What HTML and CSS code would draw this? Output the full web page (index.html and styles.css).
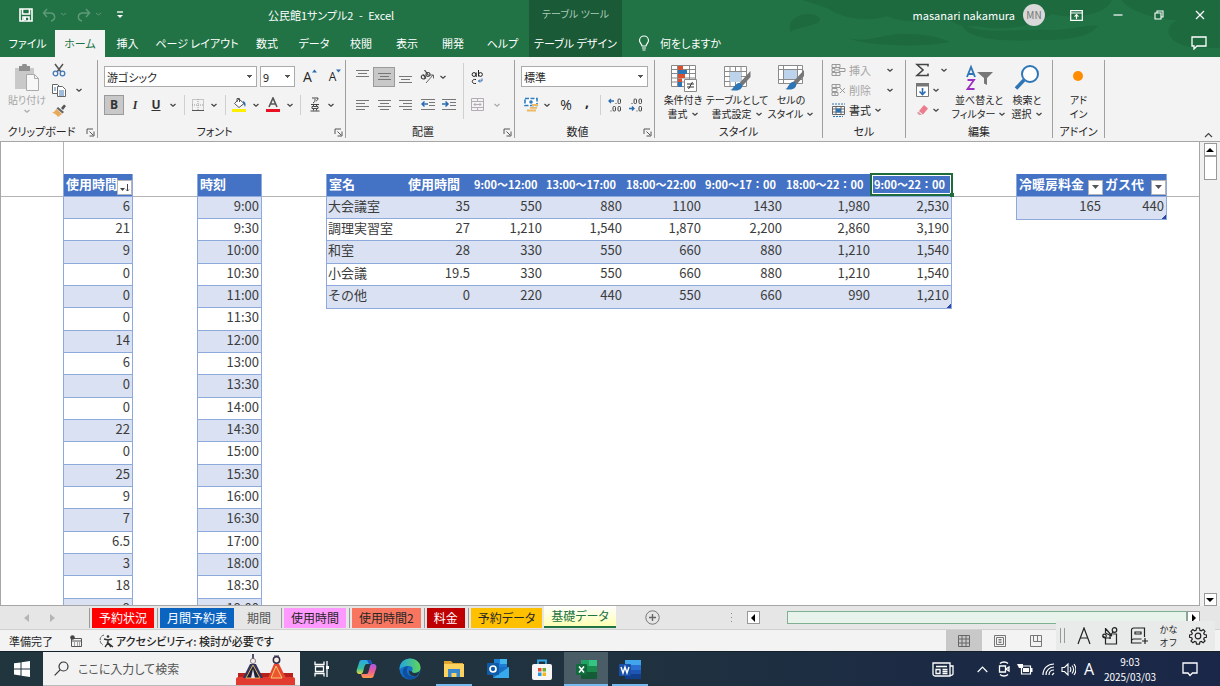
FILE: index.html
```html
<!DOCTYPE html>
<html lang="ja">
<head>
<meta charset="utf-8">
<title>公民館1サンプル2 - Excel</title>
<link rel="stylesheet" href="styles.css">
</head>
<body>
<svg class="defs" aria-hidden="true">
  <symbol id="chev" viewBox="0 0 8 8"><path d="M1.500 3 4 5.200 6.500 3" fill="none" stroke="currentColor" stroke-width="1.300"/></symbol>
  <symbol id="launch" viewBox="0 0 9 9"><path d="M1 6V1h6M3.500 3.500 7 7M8 3.500V8H3.500" fill="none" stroke="#555"/></symbol>
  <symbol id="brushgrid" viewBox="0 0 28 28"><path d="M1.500 2.500h22v20h-22zM1.500 7.500h22M1.500 12.500h22M1.500 17.500h22M7 2.500v20M12.500 2.500v20M18 2.500v20" fill="#fff" stroke="#8a8a8a"/><path d="M7 8h11v10H7z" fill="#bdd3ec"/><path d="M27.500 7v6l-8 9-3-3z" fill="#777"/><path d="M15.500 19c3 0 5 2 3 5-2 3-7 3-11 2 3-1 4-6 8-7z" fill="#2e75b6"/></symbol>
</svg>

<header class="titlebar">
  <div class="title-left">
    <nav class="quick" aria-label="クイック アクセス">
      <button aria-label="上書き保存"><svg width="14" height="14" viewBox="0 0 14 14"><path d="M1 1h12v12H1zM3.500 1v5h7V1M4 13V9h6v4" fill="none" stroke="#fff" stroke-width="1.600"/><path d="M5 9h2v3H5z" fill="#fff"/></svg></button>
      <button class="faded" aria-label="元に戻す"><svg width="26" height="14" viewBox="0 0 26 14"><path d="M5 1 1.500 5 5 9M2 5h6c6 0 6 7 1 8" fill="none" stroke="currentColor" stroke-width="1.500"/><path d="m19 5 2.500 2L24 5" fill="none" stroke="currentColor"/></svg></button>
      <button class="faded" aria-label="やり直し"><svg width="26" height="14" viewBox="0 0 26 14"><path d="m9 1 3.500 4L9 9M12 5H6c-6 0-6 7-1 8" fill="none" stroke="currentColor" stroke-width="1.500"/><path d="m19 5 2.500 2L24 5" fill="none" stroke="currentColor"/></svg></button>
      <button class="custom" aria-label="カスタマイズ"><svg width="8" height="8" viewBox="0 0 8 8"><path d="M1 1h6" stroke="#fff" stroke-width="1.300"/><path d="M1 4h6L4 7z" fill="#fff"/></svg></button>
    </nav>
    <h1 class="doc-title">公民館1サンプル2&ensp;-&ensp;Excel</h1>
  </div>
  <div class="context-label">テーブル ツール</div>
  <div class="title-right">
    <svg class="clouds" viewBox="0 0 598 57" preserveAspectRatio="none" aria-hidden="true"><path d="M180 0h310c-5 15-40 20-60 14-15 12-50 18-75 12-20 2-28-6-30-10-20 8-50 6-60 0-22 8-50 0-60-8zM226 38c20 6 40-6 60-4 20 0 34 4 42 8-30 6-84 4-102-4zM340 24c20 12 60 4 90 6 20 0 36-6 46-4-10 14-40 14-60 14-30 2-74 0-76-16zM500 0h98v48c-16 0-30 2-44-6-12-8-8-18 2-22-18 0-50-8-56-20z" fill="#1d6a3f"/><path d="M168 24c6-12 24-12 30-6 2 8-20 8-30 14z" fill="#1d6a3f"/></svg>
    <span class="user">masanari nakamura</span>
    <span class="avatar">MN</span>
    <button aria-label="リボンの表示オプション"><svg width="13" height="11" viewBox="0 0 13 11"><path d="M.7.700h11.600v9.600H.7zM.7 3h11.600M6.500 9V5M4.500 6.700l2-2 2 2" fill="none" stroke="#fff" stroke-width="1.200"/></svg></button>
    <button aria-label="最小化"><svg width="10" height="10" viewBox="0 0 10 10"><path d="M.5 5h9" stroke="#fff" stroke-width="1.200"/></svg></button>
    <button aria-label="元のサイズに戻す"><svg width="10" height="10" viewBox="0 0 10 10"><path d="M1 3h6v6H1zM3 3V1h6v6H7" fill="none" stroke="#fff" stroke-width="1.100"/></svg></button>
    <button aria-label="閉じる"><svg width="10" height="10" viewBox="0 0 10 10"><path d="m1 1 8 8m0-8L1 9" stroke="#fff" stroke-width="1.200"/></svg></button>
  </div>
  <nav class="tabs" aria-label="リボン タブ">
    <button>ファイル</button><button class="current">ホーム</button><button>挿入</button><button>ページ レイアウト</button><button>数式</button><button>データ</button><button>校閲</button><button>表示</button><button>開発</button><button>ヘルプ</button>
  </nav>
  <button class="context-tab">テーブル デザイン</button>
  <div class="tell-row">
    <button class="tell"><svg width="12" height="16" viewBox="0 0 12 16"><path d="M4 11c0-2-2.500-3-2.500-5.500a4.500 4.500 0 0 1 9 0C10.500 8 8 9 8 11zM4 13h4M4.500 15h3" fill="none" stroke="#fff" stroke-width="1.200"/></svg>何をしますか</button>
    <button aria-label="コメント"><svg width="16" height="14" viewBox="0 0 16 14"><path d="M1 1h14v9H6l-3 3v-3H1z" fill="none" stroke="#fff" stroke-width="1.300"/></svg></button>
  </div>
</header>

<section class="ribbon" aria-label="ホーム">
  <div class="group g-clip">
    <div class="body clip">
      <button class="big disabled"><svg width="26" height="28" viewBox="0 0 26 28"><path d="M1 4h19v21H1z" fill="#c9c9c9"/><path d="M5 2h3a2.500 2.500 0 0 1 5 0h3v5H5z" fill="#8f8f8f"/><path d="M12.500 10.500h8l4 4v12h-12z" fill="#f7f7f7" stroke="#aaa"/><path d="M20.500 10.500v4h4" fill="none" stroke="#aaa"/></svg><span>貼り付け</span><svg class="ch"><use href="#chev"/></svg></button>
      <div class="stack">
        <button aria-label="切り取り"><svg width="14" height="14" viewBox="0 0 14 14"><path d="m3 1 6 8M11 1 5 9" stroke="#555" stroke-width="1.500"/><circle cx="3.500" cy="10.500" r="2.300" fill="none" stroke="#4579b8" stroke-width="1.300"/><circle cx="10.500" cy="10.500" r="2.300" fill="none" stroke="#4579b8" stroke-width="1.300"/></svg></button>
        <button aria-label="コピー"><svg width="14" height="14" viewBox="0 0 14 14"><path d="M.5 1.500h5l2 2v7h-7z" fill="#fff" stroke="#666"/><path d="M5.500 3.500h5l3 3v7h-8z" fill="#fff" stroke="#666"/><path d="M2 5h2M2 7h2M7 8h5M7 10h5M7 12h5" stroke="#4579b8"/></svg></button><svg class="ch"><use href="#chev"/></svg>
        <button aria-label="書式のコピー"><svg width="14" height="13" viewBox="0 0 14 13"><path d="m9 4 3-3.500 2 1.500-3 4z" fill="#555"/><path d="m6 3 6 5-1.500 1.500-6-5z" fill="#666"/><path d="m4.500 5 5.500 5-4 3C5 11 2 9 0 9c2-1 3-2 4.500-4z" fill="#e9a95b"/></svg></button>
      </div>
    </div>
    <footer>クリップボード<svg class="la"><use href="#launch"/></svg></footer>
  </div>

  <div class="group g-font">
    <div class="body">
      <div class="line font-a">
        <select aria-label="フォント"><option>游ゴシック</option></select>
        <select aria-label="フォント サイズ"><option>9</option></select>
        <button aria-label="拡大"><span class="latin">A</span><svg class="tri" width="5" height="4" viewBox="0 0 5 4"><path d="M0 3.500 2.500.500 5 3.500z" fill="#2b6cb0"/></svg></button>
        <button aria-label="縮小"><span class="latin small">A</span><svg class="tri" width="5" height="4" viewBox="0 0 5 4"><path d="M0 .5h5L2.500 3.500z" fill="#2b6cb0"/></svg></button>
      </div>
      <div class="line font-b">
        <button class="on"><b>B</b></button><button><i class="serif">I</i></button><button><u>U</u></button><svg class="ch"><use href="#chev"/></svg>
        <span class="sep"></span>
        <button aria-label="罫線"><svg width="12" height="12" viewBox="0 0 12 12"><path d="M.5.500h11v11H.5zM6 0v12M0 6h12" fill="none" stroke="#999" stroke-dasharray="1 1"/><path d="M0 11.500h12" stroke="#555"/></svg></button><svg class="ch"><use href="#chev"/></svg>
        <span class="sep"></span>
        <button aria-label="塗りつぶし"><svg width="15" height="15" viewBox="0 0 15 15"><path d="m7 2 5 4.500-5 4-4.500-4z" fill="#fff" stroke="#555"/><path d="M5 5V1.500h2.500V5" fill="none" stroke="#555"/><path d="M11 4c3 1 3 4 2 6-1-3-2-3-2-6z" fill="#2b6cb0"/><path d="M0 12h14v3H0z" fill="#ffef00"/></svg></button><svg class="ch"><use href="#chev"/></svg>
        <button aria-label="フォントの色"><svg width="14" height="15" viewBox="0 0 14 15"><path d="m3 10 4-9 4 9M4.500 7h5" fill="none" stroke="#555" stroke-width="1.600"/><path d="M0 12h14v3H0z" fill="#e81123"/></svg></button><svg class="ch"><use href="#chev"/></svg>
        <span class="sep"></span>
        <button aria-label="ふりがな"><svg width="10" height="15" viewBox="0 0 10 15"><path d="M2 1h6c0 2-1 2.500-2 3M5 2c0 2 0 3-2 4M1 7.500h8M3.500 7.500v2H2v2h1.500v2M6.500 7.500v2H8v2H6.500v2M3.500 9.500h3M3.500 11.500h3M.5 14h9" fill="none" stroke="#444"/></svg></button><svg class="ch"><use href="#chev"/></svg>
      </div>
    </div>
    <footer>フォント<svg class="la"><use href="#launch"/></svg></footer>
  </div>

  <div class="group g-align">
    <div class="body">
      <div class="line align">
        <button aria-label="上揃え"><svg class="al"><path d="M0 .5h13M2 3.500h9M0 6.500h13"/></svg></button>
        <button class="on" aria-label="上下中央揃え"><svg class="al"><path d="M0 3.500h13M2 6.500h9M0 9.500h13"/></svg></button>
        <button aria-label="下揃え"><svg class="al"><path d="M0 6.500h13M2 9.500h9M0 12.500h13"/></svg></button>
        <button aria-label="方向"><svg width="15" height="14" viewBox="0 0 15 14"><g fill="none" stroke="#444" stroke-width="1.200"><circle cx="3.300" cy="7" r="2"/><path d="m3 4.500 3 4"/><circle cx="8" cy="4.500" r="2"/><path d="m4.500 0 4 5.500"/></g><path d="m6 13 7-8m-3 0h3.500v3.500" fill="none" stroke="#666"/></svg></button><svg class="ch near"><use href="#chev"/></svg>
        <span class="sep"></span>
        <button aria-label="折り返し"><svg width="13" height="14" viewBox="0 0 13 14"><g fill="none" stroke="#222"><circle cx="3" cy="4.500" r="1.900"/><path d="M5.200 2.500v4.500M7.500 0v6.500"/><circle cx="9.500" cy="4.500" r="1.900"/><path d="M5 9.500c-5-1-5 5 0 4"/></g><path d="M11 8.500v2.500H7.500M9 9.500 7.500 11 9 12.500" fill="none" stroke="#2b6cb0"/></svg></button><span></span>
      </div>
      <div class="line align">
        <button aria-label="左揃え"><svg class="al"><path d="M0 2.500h13M0 5.500h9M0 8.500h13M0 11.500h9"/></svg></button>
        <button aria-label="中央揃え"><svg class="al"><path d="M0 2.500h13M2 5.500h9M0 8.500h13M2 11.500h9"/></svg></button>
        <button aria-label="右揃え"><svg class="al"><path d="M0 2.500h13M4 5.500h9M0 8.500h13M4 11.500h9"/></svg></button>
        <button aria-label="インデントを減らす"><svg class="al wide"><path d="M0 1.500h14M8 4.500h6M8 7.500h6M0 11.500h14"/><path class="arrow" d="M7 6H1m2.500-2.500L1 6l2.500 2.500"/></svg></button>
        <button aria-label="インデントを増やす"><svg class="al wide"><path d="M0 1.500h14M8 4.500h6M8 7.500h6M0 11.500h14"/><path class="arrow" d="M0 6h6M3.500 3.500 6 6 3.500 8.500"/></svg></button>
        <span class="sep"></span>
        <button aria-label="セルを結合"><svg class="al faint"><path d="M.5.500h12v12H.5zM.5 3.500h12M.5 9.500h12M6.500.500v3M6.500 9.500v3M3 6.500h7M4.500 5 3 6.500 4.500 8M8.500 5 10 6.500 8.500 8"/></svg></button><svg class="ch dim"><use href="#chev"/></svg>
      </div>
    </div>
    <footer>配置<svg class="la"><use href="#launch"/></svg></footer>
  </div>

  <div class="group g-num">
    <div class="body">
      <div class="line"><select aria-label="表示形式"><option>標準</option></select></div>
      <div class="line num">
        <button aria-label="通貨"><svg width="15" height="15" viewBox="0 0 15 15"><path d="M1 1.500h12v7H1z" fill="#fff" stroke="#2b7cc0" stroke-width="1.600" stroke-dasharray="4 1.500"/><circle cx="7" cy="5" r="1.800" fill="#2b7cc0"/><path d="M8 7h6v2H8zM6 10h7v1.800H6zM3 12.500h9v2H3z" fill="#edb866"/></svg></button><svg class="ch"><use href="#chev"/></svg>
        <button class="pct">%</button><button class="comma">,</button><span class="sep"></span>
        <button aria-label="小数点以下の桁数を増やす"><svg width="14" height="14" viewBox="0 0 14 14"><path d="M6 3H1m2-2L1 3l2 2" fill="none" stroke="#2b6cb0" stroke-width="1.300"/><g fill="none" stroke="#444"><path d="M8 5v1"/><rect x="10" y="1" width="2.500" height="4.500" rx="1"/><path d="M3 12.500v1"/><rect x="5" y="8.500" width="2.500" height="4.500" rx="1"/><rect x="10" y="8.500" width="2.500" height="4.500" rx="1"/></g></svg></button>
        <button aria-label="小数点以下の桁数を減らす"><svg width="14" height="14" viewBox="0 0 14 14"><path d="M0 10.500h5M3 8.500l2 2-2 2" fill="none" stroke="#2b6cb0" stroke-width="1.300"/><g fill="none" stroke="#444"><path d="M3 5v1"/><rect x="5" y="1" width="2.500" height="4.500" rx="1"/><rect x="10" y="1" width="2.500" height="4.500" rx="1"/><path d="M8 12.500v1"/><rect x="10" y="8.500" width="2.500" height="4.500" rx="1"/></g></svg></button>
      </div>
    </div>
    <footer>数値<svg class="la"><use href="#launch"/></svg></footer>
  </div>

  <div class="group g-style">
    <div class="body bigs styles">
      <button class="big"><svg width="28" height="28" viewBox="0 0 28 28"><path d="M2.500 1.500h24v21h-24zM2.500 5.500h24M2.500 9.500h24M2.500 14h24M2.500 18h24M8.500 1.500v21M20.500 1.500v21" fill="#fff" stroke="#888"/><path d="M9 2h5v4H9zM9 10h7v4H9zM9 14.500h4V18H9z" fill="#d8502f"/><path d="M9 6h9v4H9zM9 18h4v5H9z" fill="#2e75b6"/><path d="M15.500 15.500h12v12h-12z" fill="#fff" stroke="#888"/><path d="M18 20h7M18 23h7M23.500 18l-4 7" stroke="#333"/></svg><span>条件付き</span><span>書式<svg class="ch"><use href="#chev"/></svg></span></button>
      <button class="big"><svg width="28" height="28"><use href="#brushgrid"/></svg><span>テーブルとして</span><span>書式設定<svg class="ch"><use href="#chev"/></svg></span></button>
      <button class="big"><svg width="28" height="28" viewBox="0 0 28 28"><path d="M1.500 1.500h24v18h-24zM1.500 5.500h24M1.500 15.500h24M6.500 1.500v18M20.500 1.500v18" fill="#fff" stroke="#8a8a8a"/><path d="M7 6h13v9H7z" fill="#bdd3ec"/><path d="M27 6v6l-8 9-3-3z" fill="#777"/><path d="M15.500 18c3 0 5 2 3 5-2 3-7 3-10 2 3-1 3-6 7-7z" fill="#2e75b6"/></svg><span>セルの</span><span>スタイル<svg class="ch"><use href="#chev"/></svg></span></button>
    </div>
    <footer>スタイル</footer>
  </div>

  <div class="group g-cell">
    <div class="body cells">
      <button class="disabled"><svg width="15" height="14" viewBox="0 0 15 14"><path d="M1 1.500h8v3H1zM5 1.500v3M1 9.500h8v3H1zM5 9.500v3M1 5.500h3v3H1zM14 5.500H8v3h6zM7 7H5" fill="none" stroke="#999"/></svg>挿入</button><svg class="ch"><use href="#chev"/></svg>
      <button class="disabled"><svg width="15" height="14" viewBox="0 0 15 14"><path d="M1 1.500h8v3H1zM5 1.500v3M1 9.500h6v3H1zM4 9.500v3M1 5.500h5v3H1zM9 5l5 5m0-5-5 5" fill="none" stroke="#999"/></svg>削除</button><svg class="ch"><use href="#chev"/></svg>
      <button><svg width="15" height="14" viewBox="0 0 15 14"><path d="M1.500 3.500h12v8h-12zM1.500 6h12M1.500 9h12M5 3.500v8M10 3.500v8" fill="#fff" stroke="#666"/><path d="M5 5.500h5v4H5z" fill="#2e75b6"/><path d="M1 1h13M2 13.500h10" stroke="#2e75b6" stroke-dasharray="2 1"/></svg>書式<svg class="ch"><use href="#chev"/></svg></button>
    </div>
    <footer>セル</footer>
  </div>

  <div class="group g-edit">
    <div class="body edit">
      <div class="sums">
        <button aria-label="合計"><svg width="15" height="14" viewBox="0 0 15 14"><path d="M13 3.500V1.500H2l6 5.500-6 5.500h11v-2" fill="none" stroke="#444" stroke-width="1.600"/></svg></button><svg class="ch late"><use href="#chev"/></svg>
        <button aria-label="フィル"><svg width="13" height="14" viewBox="0 0 13 14"><path d="M.5.500h12v13H.5z" fill="#fff" stroke="#777"/><path d="M0 0h13v3.500H0z" fill="#777"/><path d="M6.500 5v6.500M3.500 8.500l3 3 3-3" fill="none" stroke="#2b6cb0" stroke-width="1.600"/></svg></button><svg class="ch"><use href="#chev"/></svg>
        <button aria-label="クリア"><svg width="13" height="12" viewBox="0 0 13 12"><path d="m8 1 4 3.500-5 6L3 7z" fill="#ec7c8c"/><path d="M2.500 7.500 6 11H3L1 9z" fill="#d8a0aa"/></svg></button><svg class="ch"><use href="#chev"/></svg>
      </div>
      <button class="big"><svg width="28" height="28" viewBox="0 0 28 28"><path d="m2 13 4-10 4 10M3.500 10h5" fill="none" stroke="#2e75b6" stroke-width="1.800"/><path d="M2.500 16H9l-6.500 9H9.500" fill="none" stroke="#9b30c0" stroke-width="1.800"/><path d="M12 8h16l-6 6v7l-3-1.500V14z" fill="#777"/></svg><span>並べ替えと</span><span>フィルター<svg class="ch"><use href="#chev"/></svg></span></button>
      <button class="big"><svg width="28" height="28" viewBox="0 0 28 28"><circle cx="17" cy="10" r="8" fill="#fff" stroke="#2e75b6" stroke-width="2"/><path d="M11 16 3 24.500" stroke="#2e75b6" stroke-width="3.500"/></svg><span>検索と</span><span>選択<svg class="ch"><use href="#chev"/></svg></span></button>
    </div>
    <footer>編集</footer>
  </div>

  <div class="group g-add">
    <div class="body bigs">
      <button class="big"><svg width="28" height="28" viewBox="0 0 28 28"><circle cx="13" cy="12" r="5" fill="#ff8c00"/></svg><span>アド</span><span>イン</span></button>
    </div>
    <footer>アドイン</footer>
  </div>
  <button class="collapse" aria-label="リボンを折りたたむ"><svg width="9" height="6" viewBox="0 0 9 6"><path d="m1 5 3.500-3.500L8 5" fill="none" stroke="#444" stroke-width="1.200"/></svg></button>
</section>

<main class="work">
  <div class="sheet">
    <table class="grid t-use">
      <thead><tr><th>使用時間<button class="filter" aria-label="並べ替え済み"><svg width="10" height="8" viewBox="0 0 10 8"><path d="M0 4h5L2.500 7z" fill="#444"/><path d="M7.500 0v7M6 5.500 7.500 7 9 5.500" fill="none" stroke="#444"/></svg></button></th></tr></thead>
      <tbody>
        <tr><td>6</td></tr><tr><td>21</td></tr><tr><td>9</td></tr><tr><td>0</td></tr><tr><td>0</td></tr><tr><td>0</td></tr><tr><td>14</td></tr><tr><td>6</td></tr><tr><td>0</td></tr><tr><td>0</td></tr><tr><td>22</td></tr><tr><td>0</td></tr><tr><td>25</td></tr><tr><td>9</td></tr><tr><td>7</td></tr><tr><td>6.5</td></tr><tr><td>3</td></tr><tr><td>18</td></tr><tr><td>9</td></tr>
      </tbody>
    </table>
    <table class="grid t-clock">
      <thead><tr><th>時刻</th></tr></thead>
      <tbody>
        <tr><td>9:00</td></tr><tr><td>9:30</td></tr><tr><td>10:00</td></tr><tr><td>10:30</td></tr><tr><td>11:00</td></tr><tr><td>11:30</td></tr><tr><td>12:00</td></tr><tr><td>13:00</td></tr><tr><td>13:30</td></tr><tr><td>14:00</td></tr><tr><td>14:30</td></tr><tr><td>15:00</td></tr><tr><td>15:30</td></tr><tr><td>16:00</td></tr><tr><td>16:30</td></tr><tr><td>17:00</td></tr><tr><td>18:00</td></tr><tr><td>18:30</td></tr><tr><td>19:00</td></tr>
      </tbody>
    </table>
    <table class="grid t-room">
      <colgroup><col class="c79"><col class="c66"><col class="c72"><col class="c80"><col class="c79"><col class="c81"><col class="c88"><col class="c79"></colgroup>
      <thead><tr><th>室名</th><th>使用時間</th><th class="slot">9:00～12:00</th><th class="slot">13:00～17:00</th><th class="slot">18:00～22:00</th><th class="slot">9:00～17：00</th><th class="slot">18:00～22：00</th><th class="slot">9:00～22：00<span class="cursor"></span></th></tr></thead>
      <tbody>
        <tr><td>大会議室</td><td>35</td><td>550</td><td>880</td><td>1100</td><td>1430</td><td>1,980</td><td>2,530</td></tr>
        <tr><td>調理実習室</td><td>27</td><td>1,210</td><td>1,540</td><td>1,870</td><td>2,200</td><td>2,860</td><td>3,190</td></tr>
        <tr><td>和室</td><td>28</td><td>330</td><td>550</td><td>660</td><td>880</td><td>1,210</td><td>1,540</td></tr>
        <tr><td>小会議</td><td>19.5</td><td>330</td><td>550</td><td>660</td><td>880</td><td>1,210</td><td>1,540</td></tr>
        <tr><td>その他</td><td>0</td><td>220</td><td>440</td><td>550</td><td>660</td><td>990</td><td class="corner">1,210</td></tr>
      </tbody>
    </table>
    <table class="grid t-fee">
      <colgroup><col class="c86"><col class="c63"></colgroup>
      <thead><tr><th>冷暖房料金<button class="filter" aria-label="フィルター"><svg width="7" height="5" viewBox="0 0 7 5"><path d="M0 0h7L3.500 4z" fill="#555"/></svg></button></th><th>ガス代<button class="filter" aria-label="フィルター"><svg width="7" height="5" viewBox="0 0 7 5"><path d="M0 0h7L3.500 4z" fill="#555"/></svg></button></th></tr></thead>
      <tbody><tr><td>165</td><td class="corner">440</td></tr></tbody>
    </table>
  </div>
  <div class="vscroll">
    <button aria-label="上へ"><svg width="8" height="4" viewBox="0 0 8 4"><path d="M0 4 4 0l4 4z"/></svg></button>
    <span class="vthumb"></span>
    <button aria-label="下へ"><svg width="8" height="4" viewBox="0 0 8 4"><path d="M0 0h8L4 4z"/></svg></button>
  </div>
</main>

<nav class="sheetbar" aria-label="シート">
  <div class="sheetnav"><svg width="5" height="8" viewBox="0 0 5 8"><path d="M5 0v8L0 4z"/></svg><svg width="5" height="8" viewBox="0 0 5 8"><path d="M0 0v8l5-4z"/></svg></div>
  <div class="sheettabs">
    <button class="red">予約状況</button><button class="blue">月間予約表</button><button class="plain">期間</button><button class="pink">使用時間</button><button class="coral">使用時間2</button><button class="crimson">料金</button><button class="amber">予約データ</button><button class="active">基礎データ</button>
  </div>
  <button class="add" aria-label="新しいシート"><svg width="15" height="15" viewBox="0 0 15 15"><circle cx="7.500" cy="7.500" r="6.700" fill="none" stroke="#777"/><path d="M7.500 4v7M4 7.500h7" stroke="#666" stroke-width="1.400"/></svg></button>
  <div class="hscroll">
    <svg width="3" height="11" viewBox="0 0 3 11"><path d="M1 1h1v1H1zM1 5h1v1H1zM1 9h1v1H1z" fill="#888"/></svg>
    <button aria-label="左へ"><svg width="4" height="8" viewBox="0 0 4 8"><path d="M4 0v8L0 4z"/></svg></button>
    <span class="hthumb"></span>
    <button aria-label="右へ"><svg width="4" height="8" viewBox="0 0 4 8"><path d="M0 0v8l4-4z"/></svg></button>
  </div>
</nav>

<div class="status">
  <span>準備完了</span>
  <svg width="12" height="12" viewBox="0 0 12 12"><path d="M1.500 3.500h10v8h-10zM1.500 6h10M4 8h1M7 8h1M9 8h1M4 10h1M7 10h1M9 10h1" fill="none" stroke="#555"/><circle cx="2.500" cy="2.500" r="2.300" fill="#444"/></svg>
  <span class="access"><svg width="15" height="14" viewBox="0 0 15 14"><path d="M5 1C0 2 0 9 4 11" fill="none" stroke="#555" stroke-dasharray="3 1"/><circle cx="9" cy="2.500" r="1.300" fill="#333"/><path d="m5 5 4 1 4-1M9 6v3l-3 4M9 9l3 4M8 8l6 5" fill="none" stroke="#333" stroke-width="1.300"/></svg>アクセシビリティ: 検討が必要です</span>
  <div class="views">
    <button class="picked" aria-label="標準"><svg width="12" height="12" viewBox="0 0 12 12"><path d="M.5.500h11v11H.5zM4 .5v11M8 .5v11M.5 4h11M.5 8h11" fill="none" stroke="#666"/></svg></button>
    <button aria-label="ページ レイアウト"><svg width="12" height="12" viewBox="0 0 12 12"><path d="M.5.500h11v11H.5zM2.500 2.500h7v7h-7zM4.500 4.500h3M4.500 6h3M4.500 7.500h3" fill="none" stroke="#777"/></svg></button>
    <button aria-label="改ページ プレビュー"><svg width="12" height="12" viewBox="0 0 12 12"><path d="M.5.500h11v11H.5zM3.500.500v6h8M7.500.500v6" fill="none" stroke="#777"/></svg></button>
  </div>
</div>

<aside class="ime" aria-label="IME">
  <svg width="5" height="15" viewBox="0 0 5 15"><path d="M.5 0v15M4.500 0v15" stroke="#999"/></svg>
  <svg width="14" height="18" viewBox="0 0 14 18"><path d="M1 17 7 1l6 16M3.500 11h7" fill="none" stroke="#222" stroke-width="1.200"/></svg>
  <svg width="16" height="18" viewBox="0 0 16 18"><path d="M3.500 11v6h11V7h-4M3.500 1v5l6 3M4 2l6 7M1 9l2.500 2H9" fill="none" stroke="#222" stroke-width="1.200"/><circle cx="12.500" cy="3" r="2.300" fill="none" stroke="#222" stroke-width="1.200"/><circle cx="2.500" cy="9" r="1.800" fill="none" stroke="#222" stroke-width="1.200"/><path d="M11 5 8 9v3" fill="none" stroke="#222" stroke-width="1.200"/></svg>
  <svg width="18" height="18" viewBox="0 0 18 18"><path d="M14.500 10V1h-11a2 2 0 0 0-2 2v13h10M1.500 14a2 2 0 0 1 2-2h8M5 5h6v2H5zM15 11v6M12 14h6" fill="none" stroke="#222" stroke-width="1.200"/></svg>
  <span class="kana">かな<br>オフ</span>
  <svg width="18" height="18" viewBox="0 0 18 18"><circle cx="9" cy="9" r="2.800" fill="none" stroke="#222" stroke-width="1.200"/><path d="m7.500 1-.4 2.200-1.500.6L3.800 2.500 2 4.300l1.300 1.900-.6 1.300-2.200.4v2.400l2.200.4.6 1.500L2 14l1.800 1.700 1.800-1.300 1.500.6.4 2.200h3l.4-2.200 1.500-.6 1.800 1.300L16 14l-1.300-1.800.6-1.500 2.200-.4V7.900l-2.200-.4-.6-1.300L16 4.300l-1.800-1.800-1.800 1.300-1.500-.6L10.500 1z" fill="none" stroke="#222" stroke-width="1.200"/></svg>
</aside>

<footer class="taskbar">
  <button class="start" aria-label="スタート"><svg width="16" height="16" viewBox="0 0 16 16"><path d="M0 2.300 6.500 1.400v6H0zM7.500 1.200 16 0v7.400H7.500zM0 8.500h6.500v6L0 13.600zM7.500 8.500H16V16l-8.500-1.200z" fill="#fff"/></svg></button>
  <label class="search">
    <svg width="15" height="15" viewBox="0 0 15 15"><circle cx="9.500" cy="5.500" r="4.500" fill="none" stroke="#333" stroke-width="1.200"/><path d="M6.300 8.700.7 14.300" stroke="#333" stroke-width="1.200"/></svg>
    <input type="text" placeholder="ここに入力して検索" aria-label="検索">
    <svg class="dolls" width="60" height="32" viewBox="0 0 60 32"><path d="M3 20h55v6H3z" fill="#b8221c"/><path d="M1 26q0-2 3-2h53q3 0 3 2v6H1z" fill="#e23a2e"/><path d="M8 25 15 11h6l7 14z" fill="#34345e"/><path d="m11 25 7-13 7 13z" fill="#1f1f3a" stroke="#d9b45a"/><path d="m16 25 2-9 2 9z" fill="#e8e2e8"/><circle cx="18" cy="8" r="2.600" fill="#f6ece4" stroke="#8d8496"/><path d="M17 5.500V1h2v4.500z" fill="#55506c"/><path d="m33 25 6-14h5l7 14z" fill="#e8452f"/><path d="m36 25 5-12 6 12z" fill="#f0542f" stroke="#f3cf70"/><circle cx="41.500" cy="7" r="3.200" fill="#f8eee4" stroke="#2e2a48" stroke-width="1.500"/><path d="M39 3h5" stroke="#2e2a48"/></svg>
  </label>
  <div class="apps">
    <button aria-label="タスク ビュー"><svg width="16" height="16" viewBox="0 0 16 16"><path d="M1 .5v3h9v-3M1 15.500v-3h9v3M1.500 5.500h8v5h-8zM13 0v16" fill="none" stroke="#fff" stroke-width="1.300"/><path d="M12 5h3v3h-3z" fill="#fff"/></svg></button>
    <button aria-label="Copilot"><svg width="21" height="20" viewBox="0 0 21 20"><defs><linearGradient id="ca" x2="0" y2="1"><stop stop-color="#2aa7e8"/><stop offset=".6" stop-color="#37c09a"/><stop offset="1" stop-color="#e8d63c"/></linearGradient><linearGradient id="cb" x2="0" y2="1"><stop stop-color="#a45be8"/><stop offset=".5" stop-color="#ea5a97"/><stop offset="1" stop-color="#ff9a4a"/></linearGradient></defs><path d="M6 1h7c2 0 2 1 3 4H11c-2 0-2 1-3 4l-1 4c-1 2-2 2-3 2-3 0-4-2-3-5l2-6c.5-2 1-3 3-3z" fill="url(#ca)"/><path d="M15 19H8c-2 0-2-1-3-4h5c2 0 2-1 3-4l1-4c1-2 2-2 3-2 3 0 4 2 3 5l-2 6c-.5 2-1 3-3 3z" fill="url(#cb)"/><path d="M13 1c2 0 2 1 3 4h-3l-2-4z" fill="#1d54c4"/></svg></button>
    <button aria-label="Edge"><svg width="22" height="22" viewBox="0 0 22 22"><defs><linearGradient id="ea"><stop stop-color="#22a4e0"/><stop offset="1" stop-color="#5fd65a"/></linearGradient></defs><circle cx="11" cy="11" r="10.500" fill="#1470c8"/><path d="M.6 10C1 4 6 .5 11 .5c6 0 10.500 4 10.500 9 0 4-3 5.500-6 5.500-2 0-3-1-2.500-2 1.500-2 .5-5-3-5-4 0-8 1-9.400 4z" fill="url(#ea)"/><path d="M8 11c-1 5 3 9 10 7-4 5-12 4-14-2-1-4 1-8 6-8-1 0-2 2-2 3z" fill="#0f4f9e"/><path d="M13 13c-.5 1 .5 2 2.500 2 2 0 4-.7 5.200-2-.5 2-1.700 4-3.200 5-5 1-8-2-7.500-6 1 2 2 1 3 1z" fill="#20353d"/></svg></button>
    <button class="open" aria-label="エクスプローラー"><svg width="20" height="18" viewBox="0 0 20 18"><path d="M0 1h7l2 2h10v14H0z" fill="#e0a52e"/><path d="M0 4h20v13H0z" fill="#fbd35e"/><path d="M4 17V9h12v8h-3.500v-4h-5v4z" fill="#3987cc"/></svg></button>
    <button aria-label="Outlook"><svg width="22" height="20" viewBox="0 0 22 20"><path d="M7 0h13v10H7z" fill="#1c7fd6"/><path d="M13 0h7v5h-7z" fill="#45b5f0"/><path d="M6 8h16v11H6z" fill="#1a6fc4"/><path d="m6 19 16-11v11z" fill="#36a8ec"/><rect y="4" width="12" height="12" rx="1" fill="#0f5ba8"/><circle cx="6" cy="10" r="3" fill="none" stroke="#fff" stroke-width="1.700"/></svg></button>
    <button aria-label="Store"><svg width="20" height="21" viewBox="0 0 20 21"><path d="M6 6V1.500h8V6" fill="none" stroke="#35a8e8" stroke-width="1.800"/><rect y="5" width="20" height="16" rx="2" fill="#f6f6f6"/><path d="M6 9h3.500v3.500H6z" fill="#e74a2f"/><path d="M10.500 9H14v3.500h-3.500z" fill="#6dae2d"/><path d="M6 13.500h3.500V17H6z" fill="#2596dc"/><path d="M10.500 13.500H14V17h-3.500z" fill="#f5b81c"/></svg></button>
    <button class="open focus" aria-label="Excel"><svg width="21" height="19" viewBox="0 0 21 19"><path d="M5 0h16v19H5z" fill="#1a8a4c"/><path d="M13 0h8v6h-8z" fill="#35c481"/><path d="M5 0h8v6H5z" fill="#21a366"/><path d="M5 12h16v7H5z" fill="#145c36"/><rect y="4" width="11" height="11" rx="1" fill="#0f6b3c"/><path d="m3 6.500 5 6m0-6-5 6" stroke="#fff" stroke-width="1.600"/></svg></button>
    <button class="open" aria-label="Word"><svg width="22" height="19" viewBox="0 0 22 19"><path d="M6 0h16v19H6z" fill="#2b6fd0"/><path d="M6 0h16v5H6z" fill="#41a5ee"/><path d="M6 10h16v4H6z" fill="#1e56b5"/><path d="M6 14h16v5H6z" fill="#123f8c"/><rect y="4" width="12" height="12" rx="1" fill="#1950a8"/><path d="m2 7 2 6 2-6 2 6 2-6" fill="none" stroke="#fff" stroke-width="1.400"/></svg></button>
  </div>
  <div class="tray">
    <button aria-label="ニュース"><svg width="22" height="15" viewBox="0 0 22 15"><path d="M1 1h17v13H3a2 2 0 0 1-2-2zM18 4h3v8a2 2 0 0 1-3 1M4 4.500h11M4 7.500h4v4H4zM10.500 7.500h5M10.500 9.500h5M10.500 11.500h5" fill="none" stroke="#fff" stroke-width="1.300"/></svg></button>
    <button aria-label="隠れているインジケーター"><svg width="11" height="7" viewBox="0 0 11 7"><path d="m.7 6 4.800-5 4.800 5" fill="none" stroke="#fff" stroke-width="1.200"/></svg></button>
    <button aria-label="会議"><svg width="12" height="16" viewBox="0 0 12 16"><path d="M2 2.500c2-2 6-2 8 0M2 13.500c2 2 6 2 8 0M1.500 5h6v6h-6zM8 8l3-2v4z" fill="none" stroke="#fff" stroke-width="1.300"/></svg></button>
    <button aria-label="電源"><svg width="16" height="12" viewBox="0 0 16 12"><path d="M4.500 3h9v8h-9z" fill="none" stroke="#fff" stroke-width="1.200"/><path d="M6 5h6v4H6zM14 5h1.500v4H14zM0 1h6v4H2z" fill="#fff"/></svg></button>
    <button aria-label="Wi-Fi"><svg width="13" height="13" viewBox="0 0 13 13"><path d="M1 12C1 5 6 1 12 1M4 12c0-5 4-8 8-8M7 12c0-3 2-5 5-5M10 12l2-2" fill="none" stroke="#fff" stroke-width="1.200"/></svg></button>
    <button aria-label="音量"><svg width="15" height="13" viewBox="0 0 15 13"><path d="M1 4.500h2.500L7 1v11L3.500 8.500H1zM9 4c1 1.500 1 3.500 0 5M11 2.500c2 2.500 2 5.500 0 8M13 1c2.500 3.500 2.500 7.500 0 11" fill="none" stroke="#fff" stroke-width="1.100"/></svg></button>
    <button class="mode">A</button>
    <div class="clock"><span>9:03</span><span>2025/03/03</span></div>
    <button aria-label="通知"><svg width="16" height="15" viewBox="0 0 16 15"><path d="M1 1h14v10h-4.500L8 13.500 6 11H1z" fill="none" stroke="#fff" stroke-width="1.300"/></svg></button>
  </div>
</footer>
</body>
</html>
```

FILE: styles.css
```css
* { box-sizing: border-box; }
body {
  margin: 0;
  height: 100vh;
  display: flex;
  flex-direction: column;
  overflow: hidden;
  position: relative;
  font: 11px/14px "Noto Sans CJK JP", sans-serif;
  color: #262626;
  background: #e6e6e6;
}
button {
  font: inherit;
  color: inherit;
  background: none;
  border: 0;
  padding: 0;
  display: flex;
  align-items: center;
  justify-content: center;
  white-space: nowrap;
  font-feature-settings: "palt";
}
svg { display: block; flex: none; }
.defs { position: absolute; width: 0; height: 0; }
.ch { width: 8px; height: 8px; color: #444; justify-self: center; }
.ch.dim { color: #aaa; }
.ch.near { justify-self: start; }

/* title bar and tabs */
.titlebar {
  display: grid;
  grid-template-columns: 529px 93px 1fr;
  grid-template-rows: 30px 27px;
  background: #217346;
  color: #fff;
  font-feature-settings: "palt";
  position: relative;
}
.title-left { display: flex; align-items: center; }
.quick { display: flex; align-items: center; gap: 9px; padding-left: 19px; width: 268px; }
.quick .faded { color: #5d9a78; }
.quick .custom { margin-left: 4px; }
.doc-title { margin: 0; font-size: 11px; font-weight: 400; }
.context-label, .context-tab { background: #1b5a37; text-align: center; }
.context-label { line-height: 28px; font-size: 10px; color: #a9cbb8; }
.title-right { display: flex; align-items: center; justify-content: flex-end; }
.title-right button { width: 41px; height: 28px; position: relative; }
.clouds { position: absolute; right: 0; top: 0; width: 49%; height: 57px; }
.user, .avatar { position: relative; }
.avatar {
  width: 22px; height: 22px; margin: 0 11px 0 8px;
  border-radius: 50%; background: #d9d9d9; color: #777;
  font-size: 10px; line-height: 22px; text-align: center;
}
.tabs {
  display: grid;
  grid-template-columns: 55px 50px 45px 94px 46px 48px 46px 46px 46px 53px;
}
.tabs button, .context-tab, .tell-row button { padding-bottom: 2px; }
.tabs .current { background: #f3f3f3; color: #217346; }
.tell-row { display: flex; justify-content: space-between; padding: 0 13px 0 16px; position: relative; }
.tell { gap: 10px; }

/* ribbon */
.ribbon {
  display: flex;
  background: #f3f3f3;
  border-bottom: 1px solid #a6a6a6;
  padding: 3px 0;
  height: 85px;
  flex: none;
  position: relative;
}
.group { border-right: 1px solid #a0a0a0; display: flex; flex-direction: column; flex: none; }
.group footer {
  position: relative; text-align: center; line-height: 14px; height: 14px;
  font-feature-settings: "palt"; padding-right: 14px;
}
.g-style footer, .g-cell footer, .g-edit footer, .g-add footer { padding-right: 0; }
.la { position: absolute; right: 2px; top: 4px; width: 9px; height: 9px; }
.g-clip { width: 98px; }
.g-font { width: 248px; }
.g-align { width: 169px; }
.g-num { width: 140px; }
.g-style { width: 168px; }
.g-cell { width: 83px; }
.g-edit { width: 147px; }
.g-add { width: 52px; }
.body { flex: 1; min-height: 0; padding: 6px 6px 0; display: flex; flex-direction: column; gap: 7px; }
.line { display: grid; grid-template-rows: 21px; height: 21px; align-items: center; flex: none; }
.line button { height: 20px; }
.line .on { background: #c8c8c8; border: 1px solid #9a9a9a; }
.font-a { grid-template-columns: 153px 35px 24px 20px; column-gap: 3px; }
.font-b { grid-template-columns: 20px 22px 20px 13px 10px 17px 16px 7px 21px 11px 24px 10px 11px 18px 14px; }
.align { grid-template-columns: 21px 22px 21px 23px 20px 9px 19px 20px; }
.num { grid-template-columns: 20px 12px 26px 16px 11px 18px 24px; }
.sep { width: 1px; height: 20px; background: #d0d0d0; justify-self: center; }
.align .sep { height: 28px; }
select {
  appearance: none; font: inherit; color: inherit; height: 21px; width: 100%;
  border: 1px solid #ababab; border-radius: 0; padding: 0 2px; line-height: 18px;
  font-feature-settings: "palt";
  background: conic-gradient(from 315deg at 50% 100%, #555 90deg, transparent 0) right 4px top 8px / 5px 3px no-repeat, #fff;
}
.latin { font: 14px/18px "Open Sans", sans-serif; }
.latin.small { font-size: 12px; }
.tri { align-self: flex-start; margin-top: 2px; }
.font-b b, .font-b u { font: bold 12px/18px "Open Sans", sans-serif; color: #333; }
.font-b .serif { font: italic bold 12px/18px "Liberation Serif", serif; color: #333; }
.al { width: 13px; height: 13px; fill: none; stroke: #777; }
.al.wide { width: 14px; }
.al.faint { stroke: #b4acb4; }
.al .arrow { stroke: #2b6cb0; stroke-width: 1.5; }
.pct { font: 14px/18px "Open Sans", sans-serif; }
.comma { font: bold 14px/10px "Open Sans", sans-serif; }
.line .comma { height: 16px; align-self: start; }
.big { flex-direction: column; font-size: 10px; line-height: 14px; justify-content: flex-start; }
.big > svg:first-child { margin-bottom: 1px; }
.big span { display: flex; align-items: center; gap: 3px; }
.disabled { color: #a6a6a6; }
.clip { flex-direction: row; gap: 0; padding: 4px 0 0; }
.clip .big { width: 54px; height: 56px; }
.clip .big .ch { color: #aaa; }
.stack { display: grid; grid-template-columns: 14px 20px; grid-template-rows: 20px 20px 20px; align-items: center; margin: -4px 0 0 -2px; column-gap: 3px; }
.stack button { grid-column: 1; }
.bigs { display: grid; padding: 4px 4px 0; align-items: start; }
.styles { grid-template-columns: 48px 60px 48px; gap: 0; }
.bigs .big { justify-self: center; }
.cells { display: grid; grid-template-columns: 50px 12px; grid-template-rows: 20px 20px 20px; gap: 0 3px; padding: 0 0 0 8px; align-items: center; }
.cells button { justify-content: flex-start; gap: 3px; }
.edit { flex-direction: row; gap: 0; padding: 4px 0 0 8px; align-items: flex-start; }
.sums { display: grid; grid-template-columns: 16px 12px; grid-template-rows: 20px 20px 20px; align-items: center; margin-top: -4px; width: 34px; flex: none; }
.late { justify-self: end; margin-right: -6px; }
.edit .big { flex: none; width: 34px; }
.edit .sums + .big { width: 62px; }
.collapse { position: absolute; right: 7px; bottom: 3px; }

/* worksheet */
.work { flex: 1; min-height: 0; display: flex; }
.sheet {
  flex: 1; min-width: 0; overflow: hidden;
  display: flex; align-items: flex-start; gap: 64px;
  padding: 32px 0 0 62px;
  border: solid #a6a6a6; border-width: 0 1px 1px 1px;
  background:
    linear-gradient(#b4b4b4, #b4b4b4) 0 54px / 100% 1px no-repeat,
    linear-gradient(#b4b4b4, #b4b4b4) 62px 0 / 1px 100% no-repeat,
    #fff;
}
.grid {
  table-layout: fixed; border-collapse: separate; border-spacing: 0; flex: none;
  border: 1px solid #8ea9db; border-top: 0;
  font-size: 13px; line-height: 18px; color: #3c3c3c;
}
.grid th, .grid td { padding: 0 2px 0 1px; white-space: nowrap; border-bottom: 1px solid #8ea9db; text-align: right; vertical-align: top; }
.grid th { background: #4472c4; color: #fff; font-weight: 700; text-align: left; line-height: 20px; height: 23px; padding: 0 0 0 2px; position: relative; }
.grid td { height: 22px; }
.grid tbody tr:nth-child(3n) td { height: 23px; }
.grid tbody tr:nth-child(odd) { background: #d9e1f2; }
.grid tbody tr:nth-child(even) { background: #fff; }
.grid tbody tr:last-child td { border-bottom: 0; }
.t-use { width: 70px; }
.t-clock { width: 65px; }
.t-room { width: 626px; }
.t-room td:first-child { text-align: left; }
.t-fee { width: 151px; }
.grid .slot { font-size: 11px; }
.c63 { width: 63px; } .c66 { width: 66px; } .c72 { width: 72px; } .c79 { width: 79px; }
.c80 { width: 80px; } .c81 { width: 81px; } .c86 { width: 86px; } .c88 { width: 88px; }
.filter { position: absolute; right: 0; bottom: 1px; width: 15px; height: 15px; background: #fff; border: 1px solid #b5b5b5; }
.cursor { position: absolute; inset: -1px -2px 0 -2px; border: 2px solid #1e6b3c; box-shadow: inset 0 0 0 1px #fff; }
.cursor::after { content: ""; position: absolute; right: -3px; bottom: -3px; width: 4px; height: 4px; background: #1e6b3c; }
.corner { background: linear-gradient(135deg, transparent 50%, #2a48a8 50%) right bottom / 4px 4px no-repeat; }
.vscroll { width: 20px; display: flex; flex-direction: column; align-items: center; padding: 1px 0 0; background: #f0f0f0; }
.vscroll button { width: 13px; height: 13px; background: #fff; border: 1px solid #999; }
.vscroll button:last-child { margin-top: auto; }
.vthumb { width: 13px; height: 24px; background: #fff; border: 1px solid #999; }

/* sheet tabs */
.sheetbar { height: 24px; flex: none; display: flex; align-items: center; background: #e6e6e6; border-bottom: 1px solid #d0d0d0; }
.sheetnav { width: 90px; display: flex; gap: 21px; padding-left: 24px; fill: #b5b5b5; }
.sheettabs { display: flex; align-self: stretch; gap: 6px; padding-left: 2px; font-size: 12px; }
.sheettabs button { height: 20px; margin-top: 2px; padding: 0 7px; box-shadow: -2px 0 #e6e6e6, -3px 0 #999; }
.red { background: #f00; color: #fff; }
.blue { background: #0b64c0; color: #fff; }
.plain { color: #555; }
.sheettabs .plain { box-shadow: none; }
.pink { background: #ff99ff; }
.coral { background: #f8765f; }
.crimson { background: #c00000; color: #fff; }
.amber { background: #ffc000; }
.sheettabs .active { margin: 0 0 0 -4px; height: 22px; color: #217346; background: linear-gradient(#fff, #ffffb4); border-bottom: 2px solid #217346; box-shadow: none; }
.add { margin-left: 29px; }
.hscroll { flex: 1; display: flex; align-items: center; margin: 0 20px 0 70px; }
.hscroll > svg { margin-right: 14px; }
.hscroll button { width: 13px; height: 13px; background: #fff; border: 1px solid #999; }
.hthumb { flex: 1; height: 13px; margin-left: 27px; border: 1px solid #7fb092; background: #e8f3eb; }

/* status bar */
.status { height: 21px; flex: none; display: flex; align-items: center; background: #f3f3f3; padding-left: 9px; gap: 17px; font-feature-settings: "palt"; }
.access { display: flex; align-items: center; gap: 2px; font-weight: 500; }
.views { display: flex; margin: 0 166px 0 auto; align-self: stretch; }
.views button { width: 36px; }
.views .picked { background: #c8c8c8; }
.ime { position: absolute; right: 5px; bottom: 36px; width: 159px; height: 29px; background: #e9ebea; display: flex; align-items: center; justify-content: space-between; padding: 0 8px 0 4px; }
.kana { font-size: 9px; line-height: 13px; text-align: center; }

/* taskbar */
.taskbar { height: 35px; flex: none; display: flex; background: linear-gradient(90deg, #20353d, #20323f 50%, #1a2845 85%, #1b2748); border-top: 1px solid #14202a; color: #fff; }
.start { width: 43px; }
.search { width: 257px; display: flex; align-items: center; background: #f2f2f2; padding: 0 5px 0 11px; gap: 9px; border-bottom: 1px solid #bbb; }
.search input { flex: 1; min-width: 0; border: 0; padding: 0; background: none; font: 12px/18px "Noto Sans CJK JP", sans-serif; font-feature-settings: "palt"; }
.search input::placeholder { color: #555; opacity: 1; }
.dolls { align-self: flex-end; }
.apps { display: flex; }
.apps button { width: 44px; }
.open { background: linear-gradient(#76b9ed, #76b9ed) center bottom / 36px 2px no-repeat; }
.open.focus { background: linear-gradient(#76b9ed, #76b9ed) center bottom / 100% 2px no-repeat, #4a5c66; }
.tray { margin-left: auto; display: grid; grid-template-columns: 50px 28px 16px 26px 20px 20px 22px 60px 60px; }
.mode { font: 16px/18px "Open Sans", sans-serif; }
.clock { display: flex; flex-direction: column; align-items: center; justify-content: center; font-size: 10px; line-height: 15px; }
```
